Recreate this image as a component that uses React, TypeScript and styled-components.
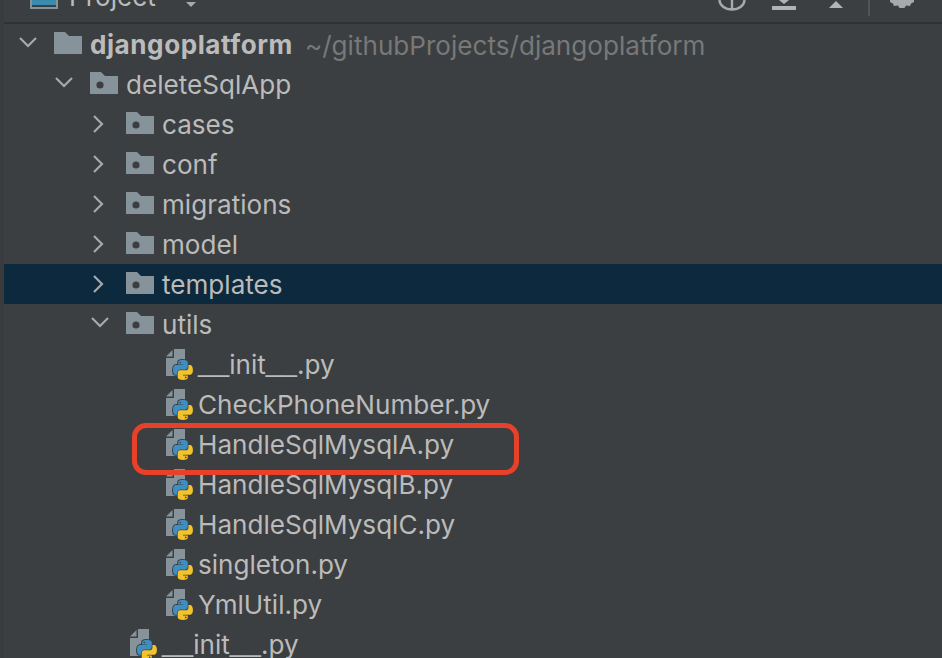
import React from 'react';
import styled, { createGlobalStyle } from 'styled-components';

const GlobalStyle = createGlobalStyle`
  html, body {
    margin: 0;
    padding: 0;
    height: 100%;
    overflow: hidden;
    background: #3c3f41;
  }
`;

const Window = styled.div`
  position: relative;
  width: 942px;
  height: 658px;
  overflow: hidden;
  display: flex;
  background: #3c3f41;
  font-family: Inter, 'Noto Sans', sans-serif;
`;

const Gutter = styled.div`
  width: 4px;
  flex: none;
  background: #393b3d;
`;

const Panel = styled.div`
  flex: 1;
  min-width: 0;
  display: flex;
  flex-direction: column;
`;

const Header = styled.header`
  height: 22px;
  flex: none;
  display: flex;
  align-items: flex-start;
  overflow: hidden;
  border-bottom: 2px solid #2f3133;
  padding: 0 28px 0 26px;
`;

const HeaderLeft = styled.div`
  display: flex;
  align-items: center;
  height: 28px;
  margin-top: -19px;
  flex: 1;
`;

const HeaderTitle = styled.span`
  font-size: 26.1px;
  line-height: 28px;
  margin: 3px 30px 0 11px;
  color: #bbbbbb;
`;

const Caret = styled.svg`
  margin-top: 19px;
`;

const HeaderTools = styled.div`
  display: flex;
  align-items: flex-start;
`;

const ToolDivider = styled.div`
  width: 2px;
  height: 16px;
  background: #515456;
  margin: 0 20px 0 25px;
`;

const ToolIcon = styled.svg<{ $gap?: number }>`
  flex: none;
  margin-left: ${(p) => p.$gap ?? 0}px;
`;

const Tree = styled.ul`
  list-style: none;
  margin: 0;
  padding: 0;
`;

const Row = styled.li<{ $depth: number; $selected?: boolean }>`
  height: 40px;
  display: flex;
  align-items: center;
  padding-left: ${(p) => 14 + p.$depth * 36}px;
  background: ${(p) => (p.$selected ? '#0d293e' : 'transparent')};
`;

const ChevronSlot = styled.span`
  width: 36px;
  flex: none;
  display: flex;
`;

const IconSlot = styled.span`
  width: 36px;
  flex: none;
  display: flex;
  margin-top: -2px;
`;

const FileGlyph = styled.svg`
  margin-left: 4px;
  margin-top: 2px;
`;

const Label = styled.span<{ $bold?: boolean }>`
  font-size: 26.1px;
  line-height: 40px;
  margin-top: 2px;
  white-space: nowrap;
  color: #bbbbbb;
  font-weight: ${(p) => (p.$bold ? 700 : 400)};
  letter-spacing: ${(p) => (p.$bold ? '0.55px' : '0')};
`;

const Dunder = styled.span`
  font-family: 'Liberation Sans', sans-serif;
  font-size: 28px;
  line-height: 0;
  vertical-align: 3px;
`;

const Hint = styled.span`
  font-size: 26.1px;
  margin: 2px 0 0 12px;
  color: #787878;
  white-space: nowrap;
`;

const Callout = styled.div`
  position: absolute;
  left: 132px;
  top: 423px;
  width: 387px;
  height: 52px;
  box-sizing: border-box;
  border: 5px solid #e8412a;
  border-radius: 14px;
  pointer-events: none;
`;

function Chevron({ open }: { open: boolean }) {
  return (
    <svg width="20" height="20" viewBox="0 0 20 20" fill="none" stroke="#a7a9ab" strokeWidth="2.2">
      <path d={open ? 'M2 4l8 8 8-8' : 'M4 2l8 8-8 8'} />
    </svg>
  );
}

function Folder({ plain }: { plain?: boolean }) {
  return (
    <svg width="28" height="22" viewBox="0 0 28 22">
      <path d="M0 0h11l4 4h13v18H0z" fill="#87939a" />
      {!plain && <circle cx="10" cy="13" r="3.6" fill="#3c3f41" />}
    </svg>
  );
}

function PythonFile() {
  return (
    <FileGlyph width="28" height="31" viewBox="0 0 28 31">
      <path d="M8 0h11v27H0V9h8z" fill="#87939a" />
      <path d="M0 7.5L6.5 1v6.5z" fill="#87939a" />
      <g transform="translate(7 11) scale(0.83)">
        <path
          d="M11.9 0C5.8 0 6.2 2.6 6.2 2.6v2.7h5.8v.8H3.9S0 5.7 0 11.9s3.4 6 3.4 6h2v-2.9s-.1-3.4 3.4-3.4h5.8s3.2.1 3.2-3.1V3.2S18.3 0 11.9 0z"
          fill="#3c8fc4"
          stroke="#3c3f41"
          strokeWidth="2.4"
          paintOrder="stroke"
        />
        <circle cx="8.7" cy="3" r="1" fill="#3c3f41" />
        <path
          d="M12.1 24c6.1 0 5.7-2.6 5.7-2.6v-2.7h-5.8v-.8h8.1s3.9.4 3.9-5.8-3.4-6-3.4-6h-2v2.9s.1 3.4-3.4 3.4H8.9s-3.2-.1-3.2 3.1v5.3S5.2 24 12.1 24z"
          fill="#f2c32c"
          stroke="#3c3f41"
          strokeWidth="1.2"
          paintOrder="stroke"
        />
        <circle cx="15.3" cy="21" r="1" fill="#3c3f41" />
      </g>
    </FileGlyph>
  );
}

function ProjectIcon() {
  return (
    <svg width="28" height="28" viewBox="0 0 28 28">
      <rect x="1" y="1" width="26" height="26" fill="none" stroke="#87939a" strokeWidth="2" />
      <rect x="2" y="2" width="24" height="22" fill="#3b8bb0" />
    </svg>
  );
}

function ToolIcons() {
  return (
    <>
      <ToolIcon width="28" height="11" viewBox="0 0 28 11" fill="none" stroke="#a7a9ab" strokeWidth="2.4">
        <path d="M1.5 0a12.5 9.5 0 0 0 25 0M14 0v10" />
      </ToolIcon>
      <ToolIcon $gap={26} width="24" height="10" viewBox="0 0 24 10">
        <path d="M7 0h10l-5 4z" fill="#b2b4b6" />
        <rect y="6" width="24" height="4" fill="#b2b4b6" />
      </ToolIcon>
      <ToolIcon $gap={33} width="14" height="8" viewBox="0 0 14 8">
        <path d="M7 1l7 7H0z" fill="#b2b4b6" />
      </ToolIcon>
      <ToolDivider />
      <ToolIcon width="24" height="9" viewBox="0 0 24 9">
        <path d="M0 0h24v2l-3 1.500-1 2.500-4-.5L14.500 8h-5L8 5.500 4 6 3 3.500 0 2z" fill="#a7a9ab" />
      </ToolIcon>
    </>
  );
}

function splitUnderscores(name: string) {
  return name.split(/(_+)/).map((part, i) =>
    part.startsWith('_') ? <Dunder key={i}>{part}</Dunder> : part,
  );
}

type Item = {
  name: string;
  depth: number;
  kind: 'root' | 'open' | 'closed' | 'file';
  selected?: boolean;
};

const items: Item[] = [
  { name: 'djangoplatform', depth: 0, kind: 'root' },
  { name: 'deleteSqlApp', depth: 1, kind: 'open' },
  { name: 'cases', depth: 2, kind: 'closed' },
  { name: 'conf', depth: 2, kind: 'closed' },
  { name: 'migrations', depth: 2, kind: 'closed' },
  { name: 'model', depth: 2, kind: 'closed' },
  { name: 'templates', depth: 2, kind: 'closed', selected: true },
  { name: 'utils', depth: 2, kind: 'open' },
  { name: '__init__.py', depth: 3, kind: 'file' },
  { name: 'CheckPhoneNumber.py', depth: 3, kind: 'file' },
  { name: 'HandleSqlMysqlA.py', depth: 3, kind: 'file' },
  { name: 'HandleSqlMysqlB.py', depth: 3, kind: 'file' },
  { name: 'HandleSqlMysqlC.py', depth: 3, kind: 'file' },
  { name: 'singleton.py', depth: 3, kind: 'file' },
  { name: 'YmlUtil.py', depth: 3, kind: 'file' },
  { name: '__init__.py', depth: 2, kind: 'file' },
];

export default function App() {
  return (
    <Window>
      <GlobalStyle />
      <Gutter />
      <Panel>
        <Header>
          <HeaderLeft>
            <ProjectIcon />
            <HeaderTitle>Project</HeaderTitle>
            <Caret width="10" height="5" viewBox="0 0 10 5">
              <path d="M0 0h10L5 5z" fill="#a7a9ab" />
            </Caret>
          </HeaderLeft>
          <HeaderTools>
            <ToolIcons />
          </HeaderTools>
        </Header>
        <Tree>
          {items.map((item, i) => (
            <Row key={i} $depth={item.depth} $selected={item.selected}>
              <ChevronSlot>
                {item.kind !== 'file' && <Chevron open={item.kind !== 'closed'} />}
              </ChevronSlot>
              <IconSlot>
                {item.kind === 'file' ? <PythonFile /> : <Folder plain={item.kind === 'root'} />}
              </IconSlot>
              <Label $bold={item.kind === 'root'}>{splitUnderscores(item.name)}</Label>
              {item.kind === 'root' && <Hint>~/githubProjects/djangoplatform</Hint>}
            </Row>
          ))}
        </Tree>
      </Panel>
      <Callout />
    </Window>
  );
}
